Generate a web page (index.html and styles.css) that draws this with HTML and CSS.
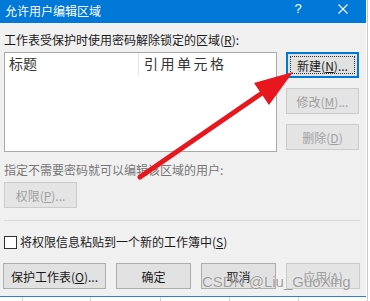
FILE: index.html
```html
<!DOCTYPE html>
<html lang="zh-CN">
<head>
    <meta charset="UTF-8">
    <title>允许用户编辑区域</title>
    <link rel="stylesheet" href="styles.css">
</head>
<body>
    <div class="screen">
        <div class="dialog">
            <div class="titlebar">
                <span class="title">允许用户编辑区域</span>
                <span class="help">?</span>
                <span class="close">
                    <svg width="10" height="10" viewBox="0 0 10 10"><path d="M0.5 0.5 L9.5 9.5 M9.5 0.5 L0.5 9.5" stroke="#fff" stroke-width="1.1" fill="none"/></svg>
                </span>
            </div>
            <div class="content">
                <div class="label">工作表受保护时使用密码解除锁定的区域(<u>R</u>):</div>
                <div class="ranges">
                    <div class="listbox">
                        <div class="list-head">
                            <div class="col col-title">标题</div>
                            <div class="col col-ref">引用单元格</div>
                        </div>
                    </div>
                    <div class="side-buttons">
                        <button class="btn btn-default"><span class="focus">新建(<u>N</u>)...</span></button>
                        <button class="btn" disabled>修改(<u>M</u>)...</button>
                        <button class="btn" disabled>删除(<u>D</u>)</button>
                    </div>
                </div>
                <div class="label label-disabled">指定不需要密码就可以编辑该区域的用户:</div>
                <button class="btn btn-perm" disabled>权限(<u>P</u>)...</button>
                <div class="separator"></div>
                <label class="check-row"><span class="checkbox"></span>将权限信息粘贴到一个新的工作簿中(<u>S</u>)</label>
                <div class="footer">
                    <button class="btn btn-protect">保护工作表(<u>O</u>)...</button>
                    <button class="btn">确定</button>
                    <button class="btn">取消</button>
                    <button class="btn" disabled>应用(<u>A</u>)</button>
                </div>
            </div>
        </div>
        <div class="gutter"></div>
    </div>
    <div class="grid-strip">
        <div class="cell c1"></div>
        <div class="cell c2"></div>
        <div class="cell c3"></div>
        <div class="cell c4"></div>
        <div class="cell c4"></div>
        <div class="cell c4"></div>
    </div>

    <svg class="arrow" width="370" height="301" viewBox="0 0 370 301">
        <line x1="140" y1="177" x2="265" y2="91" stroke="#e8161d" stroke-width="5" stroke-linecap="round"/>
        <polygon points="293,72 254,83 269,105" fill="#e8161d"/>
    </svg>
    <div class="watermark">CSDN @Liu_GuoXing</div>
</body>
</html>
```

FILE: styles.css
```css
body {
    margin: 0;
    width: 370px;
    height: 301px;
    overflow: hidden;
    background: #fff;
    font-family: "Noto Sans CJK SC", "Liberation Sans", sans-serif;
    font-size: 12px;
    color: #1a1a1a;
    position: relative;
}
.screen {
    display: flex;
    height: 297px;
}
.dialog {
    width: 366px;
    height: 296px;
    background: #f0f0f0;
    border-bottom: 1px solid #2f7fd0;
    display: flex;
    flex-direction: column;
}
.titlebar {
    height: 23px;
    background: #0078d7;
    color: #fff;
    display: flex;
    align-items: flex-start;
    padding: 0 18px 0 5px;
}
.title {
    flex: 1;
    line-height: 22px;
    font-size: 12px;
}
.help {
    width: 10px;
    text-align: center;
    font-family: "Liberation Sans", sans-serif;
    font-size: 13px;
    line-height: 18px;
}
.close {
    width: 10px;
    height: 10px;
    margin: 4px 0 0 35px;
    display: flex;
}
.content {
    padding: 0 0 0 4px;
    display: flex;
    flex-direction: column;
    align-items: flex-start;
}
.label {
    line-height: 16px;
    margin-top: 9px;
    white-space: nowrap;
}
.label-disabled {
    color: #767676;
    margin-top: 10px;
}
.ranges {
    display: flex;
    align-items: flex-start;
    margin-top: 4px;
}
.listbox {
    width: 271px;
    height: 98px;
    background: #fff;
    border: 1px solid #a9a9a9;
}
.list-head {
    display: flex;
    height: 22px;
}
.col {
    font-size: 14px;
    line-height: 20px;
    color: #333;
}
.col-title {
    width: 129px;
    padding-left: 4px;
    border-right: 1px solid #e5e5e5;
}
.col-ref {
    padding-left: 5px;
    letter-spacing: 2.5px;
}
.side-buttons {
    display: flex;
    flex-direction: column;
    gap: 10px;
    margin-left: 9px;
}
.btn {
    width: 73px;
    height: 26px;
    padding: 0;
    font-family: inherit;
    font-size: 12px;
    color: #1a1a1a;
    background: #e1e1e1;
    border: 1px solid #adadad;
    display: flex;
    align-items: center;
    justify-content: center;
}
.btn:disabled {
    background: #e4e4e4;
    border-color: #cbcbcb;
    color: #a0a0a0;
}
.btn-default {
    border-color: #0078d7;
    box-shadow: inset 0 0 0 1px #0078d7;
    padding: 3px;
}
.focus {
    flex: 1;
    align-self: stretch;
    border: 1px dotted #333;
    display: flex;
    align-items: center;
    justify-content: center;
}
.btn-perm {
    margin-top: 4px;
}
.separator {
    width: 356px;
    height: 0;
    border-top: 1px solid #dadada;
    margin-top: 12px;
}
.check-row {
    display: flex;
    align-items: center;
    margin-top: 13px;
    line-height: 16px;
}
.checkbox {
    width: 11px;
    height: 11px;
    background: #fff;
    border: 1px solid #333;
    margin-right: 3px;
}
.footer {
    display: flex;
    gap: 10px;
    margin-top: 13px;
    margin-left: -1px;
}
.footer .btn {
    width: 75px;
}
.footer .btn-protect {
    width: 103px;
}
.footer .btn:last-child {
    width: 74px;
}
.gutter {
    width: 4px;
    background: linear-gradient(to right, #fff 1px, #c8c8c8 1px, #c8c8c8 2px, #fff 2px);
}
.grid-strip {
    display: flex;
    height: 4px;
    background: #fff;
}
.cell {
    border-right: 1px solid #d4d4d4;
}
.c1 { width: 22px; }
.c2 { width: 67px; }
.c3 { width: 69px; }
.c4 { width: 68px; }
.arrow {
    position: absolute;
    left: 0;
    top: 0;
    pointer-events: none;
}
.watermark {
    position: absolute;
    left: 202px;
    top: 273px;
    font-family: "Liberation Sans", sans-serif;
    font-size: 15px;
    line-height: 17px;
    color: rgba(90, 90, 90, 0.6);
    text-shadow: 0 0 1px #fff;
    pointer-events: none;
}
```
